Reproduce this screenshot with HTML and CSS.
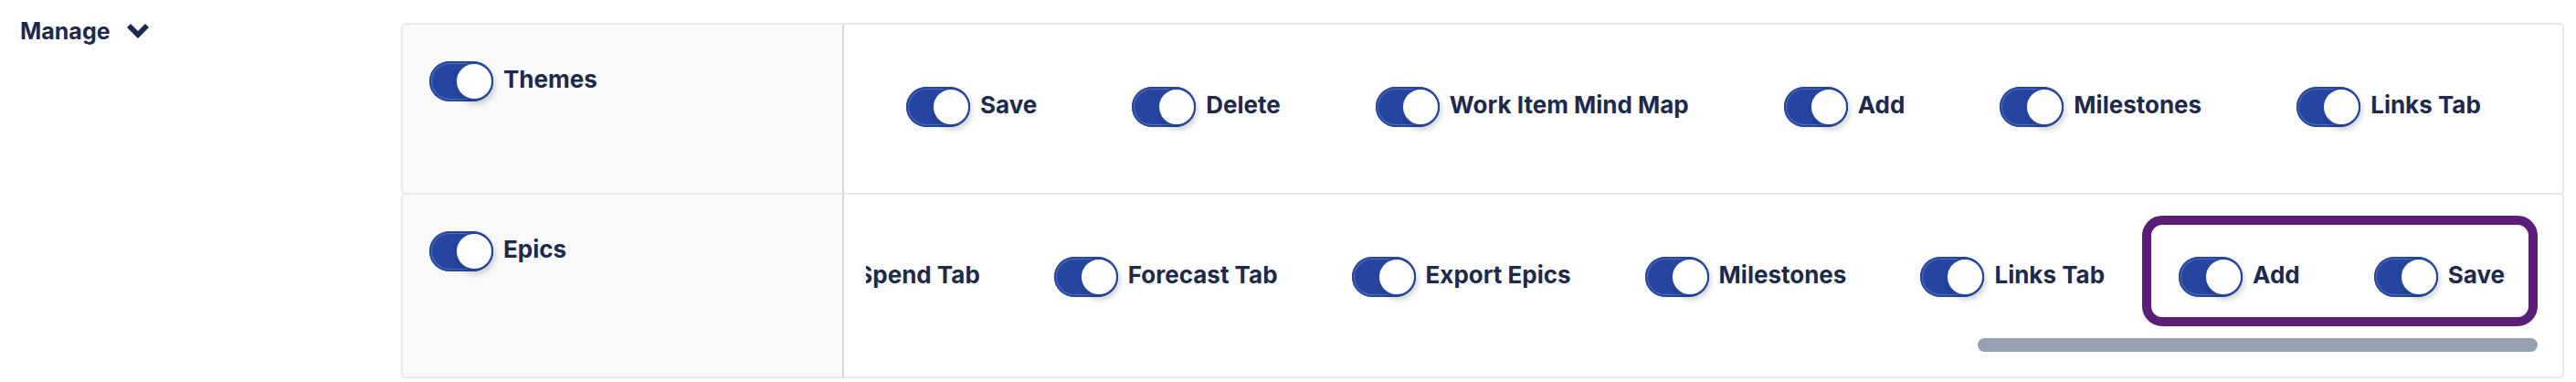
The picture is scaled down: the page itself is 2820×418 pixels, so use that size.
FILE: index.html
```html
<!DOCTYPE html>
<html lang="en">
<head>
<meta charset="utf-8">
<title>Manage permissions</title>
<link rel="stylesheet" href="styles.css">
</head>
<body>
<div class="page">
  <div class="section-head">
    <span class="section-title">Manage</span>
    <svg class="chev" viewBox="0 0 24 16" width="24" height="16" aria-hidden="true"><polygon points="0,4 4,0 12,8 20,0 24,4 12,16"/></svg>
  </div>

  <div class="perm-table">
    <div class="perm-row">
      <div class="perm-main">
        <label class="perm"><span class="toggle"><span class="knob"></span></span><span class="perm-label">Themes</span></label>
      </div>
      <div class="perm-actions">
        <div class="perm-scroll">
          <div class="perm-list perm-list--spread">
            <label class="perm"><span class="toggle"><span class="knob"></span></span><span class="perm-label">Save</span></label>
            <label class="perm"><span class="toggle"><span class="knob"></span></span><span class="perm-label">Delete</span></label>
            <label class="perm"><span class="toggle"><span class="knob"></span></span><span class="perm-label">Work Item Mind Map</span></label>
            <label class="perm"><span class="toggle"><span class="knob"></span></span><span class="perm-label">Add</span></label>
            <label class="perm"><span class="toggle"><span class="knob"></span></span><span class="perm-label">Milestones</span></label>
            <label class="perm"><span class="toggle"><span class="knob"></span></span><span class="perm-label">Links Tab</span></label>
          </div>
        </div>
      </div>
    </div>

    <div class="perm-row">
      <div class="perm-main">
        <label class="perm"><span class="toggle"><span class="knob"></span></span><span class="perm-label">Epics</span></label>
      </div>
      <div class="perm-actions">
        <div class="perm-scroll perm-scroll--end">
          <div class="perm-list">
            <label class="perm"><span class="toggle"><span class="knob"></span></span><span class="perm-label">Spend Tab</span></label>
            <label class="perm"><span class="toggle"><span class="knob"></span></span><span class="perm-label">Forecast Tab</span></label>
            <label class="perm"><span class="toggle"><span class="knob"></span></span><span class="perm-label">Export Epics</span></label>
            <label class="perm"><span class="toggle"><span class="knob"></span></span><span class="perm-label">Milestones</span></label>
            <label class="perm"><span class="toggle"><span class="knob"></span></span><span class="perm-label">Links Tab</span></label>
            <div class="perm-group">
              <label class="perm"><span class="toggle"><span class="knob"></span></span><span class="perm-label">Add</span></label>
              <label class="perm"><span class="toggle"><span class="knob"></span></span><span class="perm-label">Save</span></label>
            </div>
          </div>
        </div>
        <div class="hscroll"><div class="hscroll-thumb"></div></div>
      </div>
    </div>
  </div>
</div>
</body>
</html>
```

FILE: styles.css
```css
* {
  box-sizing: border-box;
}

html, body {
  margin: 0;
  background: #ffffff;
}

body {
  font-family: Inter, "Noto Sans", "Liberation Sans", sans-serif;
  font-size: 26px;
  font-weight: 700;
  color: #1d2a4d;
}

.page {
  display: flex;
  align-items: flex-start;
  padding: 18px 13px 0 22px;
}

.section-head {
  width: 417px;
  flex: none;
  display: flex;
  align-items: center;
  gap: 18px;
}

.section-title {
  font-size: 25px;
  font-weight: 700;
  line-height: 32px;
}

.chev {
  display: block;
  fill: #1d2a4d;
}

.perm-table {
  flex: 1;
  min-width: 0;
  margin-top: 7px;
  display: flex;
  flex-direction: column;
}

.perm-row {
  display: grid;
  grid-template-columns: 483px minmax(0, 1fr);
  border: 2px solid #e9e9e9;
  border-radius: 5px;
  overflow: hidden;
}

.perm-row + .perm-row {
  margin-top: -2px;
}

.perm-main {
  background: #f9f9f9;
  border-right: 2px solid #d6d6d6;
  padding: 40px 20px 0 29px;
}

.perm-actions {
  min-width: 0;
  padding: 0 27px 27px 24px;
  background: #ffffff;
}

.perm-scroll {
  display: flex;
  overflow: hidden;
}

.perm-scroll--end {
  justify-content: flex-end;
}

.perm-list {
  flex: none;
  display: flex;
  align-items: center;
  gap: 81px;
  width: max-content;
  padding: 68px 36px 45px 44px;
}

.perm-list--spread {
  gap: 104px;
}

.perm {
  display: inline-flex;
  align-items: center;
  gap: 11px;
  white-space: nowrap;
}

.perm-label {
  line-height: 1.21;
  margin-bottom: 4px;
}

.toggle {
  flex: none;
  width: 70px;
  height: 44px;
  border-radius: 22px;
  background: #2546a0;
  display: flex;
  justify-content: flex-end;
  align-items: flex-start;
  padding: 1px 0 0 0;
  box-shadow: inset 0 0 0 2px #2546a0, inset 0 0 0 3px rgba(255, 255, 255, 0.22);
}

.knob {
  width: 42px;
  height: 42px;
  border-radius: 50%;
  background: #ffffff;
  border: 2px solid #2546a0;
  box-shadow: 2px 4px 6px rgba(0, 0, 0, 0.18);
}

.perm-group {
  position: relative;
  display: flex;
  align-items: center;
  gap: 81px;
}

.perm-group::after {
  content: "";
  position: absolute;
  top: -45px;
  bottom: -32px;
  left: -40px;
  right: -36px;
  border: 10px solid #5b1e78;
  border-radius: 22px;
  pointer-events: none;
}

.hscroll {
  height: 15px;
  display: flex;
  justify-content: flex-end;
}

.hscroll-thumb {
  width: 613px;
  height: 100%;
  border-radius: 8px;
  background: #95a1b1;
}
```
